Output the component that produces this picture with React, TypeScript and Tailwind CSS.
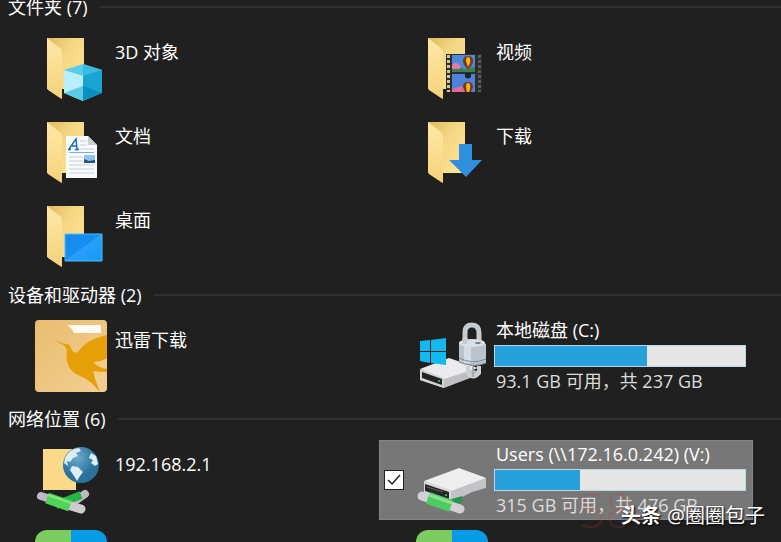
import type { ReactNode } from "react";

function Folder({ children }: { children?: ReactNode }) {
  return (
    <svg viewBox="0 0 72 72" className="size-[72px] shrink-0" aria-hidden="true">
      <defs>
        <linearGradient id="back" x1="0" y1="0" x2="1" y2="1">
          <stop offset="0" stopColor="#dfb85c" />
          <stop offset="0.4" stopColor="#f5d783" />
          <stop offset="1" stopColor="#ffe59a" />
        </linearGradient>
        <linearGradient id="flap" x1="0" y1="0" x2="0" y2="1">
          <stop offset="0" stopColor="#ffe9a8" />
          <stop offset="1" stopColor="#f6d27a" />
        </linearGradient>
        <linearGradient id="screen" x1="0" y1="0" x2="1" y2="1">
          <stop offset="0" stopColor="#1687e8" />
          <stop offset="0.49" stopColor="#1590f2" />
          <stop offset="0.5" stopColor="#2a9ffb" />
          <stop offset="1" stopColor="#129afa" />
        </linearGradient>
      </defs>
      <path d="M12 6H49V57H12Z" fill="url(#back)" />
      <path d="M12 6L26 17Q27 18 27 20V67L25 66L13 58Q12 57 12 55Z" fill="url(#flap)" />
      {children}
    </svg>
  );
}

function Cube() {
  return (
    <g>
      <path d="M29 38L48 44V69L29 61Z" fill="#b8effa" />
      <path d="M48 44L67 38V61L48 69Z" fill="#18a5d2" />
      <path d="M29 61L48 54V69Z" fill="#5ccbe4" />
      <path d="M48 54L67 61L48 69Z" fill="#0b8fbe" />
      <path d="M29 38L48 32L67 38L48 44Z" fill="#5accea" />
      <path d="M48 32L67 38L48 44Z" fill="#3bbbe0" />
    </g>
  );
}

function Paper() {
  return (
    <g>
      <path d="M31 20H53L62 29V62H31Z" fill="#f8fafc" />
      <path d="M53 20V29H62Z" fill="#cbd0d6" />
      <path d="M45 25H52M45 29H52M45 33H59M34 49H59M34 53H59M34 57H59M34 41H48M34 45H48" stroke="#c3d0da" strokeWidth="1" />
      <path d="M34 36.500H59" stroke="#7fb0d3" strokeWidth="1" />
      <path d="M34 33L41 23L42 33M37 30H42M33 33.500H36M40 33.500H44" stroke="#176ea5" strokeWidth="1.400" fill="none" />
      <path d="M49 39H60V47H49Z" fill="#8fc4ea" />
      <path d="M49 43L54 45L60 44V47H49Z" fill="#26537c" />
    </g>
  );
}

function Film() {
  return (
    <g>
      <path d="M30 22H66V60H30Z" fill="#2d2d2d" />
      <path d="M32.500 23V60" stroke="#d6c98d" strokeWidth="3" strokeDasharray="3 2" />
      <path d="M63.500 23V60" stroke="#5b5b5b" strokeWidth="3" strokeDasharray="3 2" />
      <path d="M36 23H59V40H36Z" fill="#4a8be0" />
      <path d="M36 42H59V60H36Z" fill="#4d83dc" />
      <path d="M36 36Q42 33 48 37L59 35V40H36Z" fill="#3b8055" />
      <path d="M36 33Q40 28 45 34L44 37H36Z" fill="#e279a6" />
      <path d="M36 57L46 54L50 60H36Z" fill="#e16a96" />
      <path d="M47 29Q47 24 52 24Q57 24 57 29Q57 33 52 37Q47 33 47 29Z" fill="#81350f" />
      <path d="M50 29Q50 25 52 25Q55 25 54 31L52 35Z" fill="#f6b824" />
      <path d="M49 41H55V45Q52 48 49 45Z" fill="#222222" />
      <path d="M47 55Q47 50 52 50Q57 50 57 55L55 60H49Z" fill="#81350f" />
      <path d="M50 55Q50 51 52 51Q55 51 54 57L53 60H51Z" fill="#f6b824" />
    </g>
  );
}

function Bird() {
  return (
    <svg viewBox="0 0 72 72" className="size-[72px] shrink-0" aria-hidden="true">
      <defs>
        <linearGradient id="sand" x1="0" y1="0" x2="1" y2="1">
          <stop offset="0" stopColor="#e9bd70" />
          <stop offset="1" stopColor="#f4cf92" />
        </linearGradient>
        <clipPath id="tile"><rect width="72" height="72" rx="4" /></clipPath>
      </defs>
      <g clipPath="url(#tile)">
        <rect width="72" height="72" fill="url(#sand)" />
        <path d="M32 5H65Q66 5 66 7V13H39Q37 8 32 5Z" fill="#fffdf5" />
        <path d="M18 20Q25 21 29 24Q34 23 36 28Q38 34 43 32Q50 20 72 15V38Q66 42 58 42Q64 48 72 49V52Q64 52 58 51Q60 60 65 72Q54 59 45 56Q35 52 32 42Q31 35 32 31Q31 24 18 20Z" fill="#e5a008" />
      </g>
    </svg>
  );
}

function SystemDrive() {
  return (
    <svg viewBox="0 0 72 72" className="size-[72px] shrink-0" aria-hidden="true">
      <path d="M4 52L30 45L62 51V55L28 68L4 60Z" fill="#bfc0c3" />
      <path d="M4 49L33 38L62 48L28 59Z" fill="#ebebed" />
      <path d="M4 49L28 58V68L4 60Z" fill="#d3d3d6" />
      <path d="M6 52L26 59V65L6 58Z" fill="#202322" />
      <circle cx="23" cy="61" r="1" fill="#43d35b" />
      <path d="M4 21L14 20V31H4ZM15 20L30 18V31H15ZM4 32H14V43L4 41ZM15 32H30V45L15 43Z" fill="#12b9ee" />
      <path d="M49 24V12Q49 5 56 5Q63 5 63 13V24" fill="none" stroke="#c6cbd0" strokeWidth="5" />
      <path d="M43 22Q56 17 70 24V43Q57 49 43 42Z" fill="#b9c3cc" />
      <path d="M48 26V43H55V27Z" fill="#d5dce2" />
      <ellipse cx="56" cy="23" rx="13" ry="4" fill="#d9dfe4" />
      <path d="M43 38Q57 45 70 39M43 42Q57 48 70 43" fill="none" stroke="#7e8d9a" strokeWidth="1" />
      <path d="M49 24V18" stroke="#c6cbd0" strokeWidth="5" />
      <ellipse cx="62" cy="23" rx="3" ry="1" fill="#687986" />
      <path d="M52 46V53Q57 60 63 53V46" fill="none" stroke="#cbd0d4" strokeWidth="4" />
      <path d="M57 47V57" stroke="#a6adb4" strokeWidth="2" />
    </svg>
  );
}

function NetworkDrive() {
  return (
    <svg viewBox="0 0 72 72" className="size-[72px] shrink-0" aria-hidden="true">
      <path d="M8 39L44 25L70 34V44L56 48L34 59L8 50Z" fill="#c3c3c7" />
      <path d="M8 37L43 24L70 34L35 47Z" fill="#eeeeef" />
      <path d="M8 37L35 46V58L8 49Z" fill="#dadade" />
      <path d="M9 40L33 48V55L9 47Z" fill="#272827" />
      <path d="M11 43L27 48" stroke="#666666" strokeWidth="1" />
      <circle cx="30" cy="51" r="1" fill="#43d35b" />
      <path d="M32 56L46 52V58L36 64Z" fill="#26984d" />
      <path d="M6 52L44 65" stroke="#d2cfd8" strokeWidth="9" strokeLinecap="round" />
      <path d="M12 54L35 62" stroke="#4dcc62" strokeWidth="12" />
      <path d="M13 51L36 59" stroke="#8be291" strokeWidth="3" />
    </svg>
  );
}

function NetworkPlace() {
  return (
    <svg viewBox="0 0 72 72" className="size-[72px] shrink-0" aria-hidden="true">
      <defs>
        <radialGradient id="sea" cx="0.4" cy="0.3">
          <stop offset="0" stopColor="#6eaccb" />
          <stop offset="1" stopColor="#2a719c" />
        </radialGradient>
      </defs>
      <path d="M8 5H41V46H8Z" fill="#fbd98b" />
      <circle cx="46" cy="21" r="18" fill="url(#sea)" />
      <path d="M30 14Q34 5 44 4L46 7L41 9L43 12L38 14L35 18L32 17L33 22L29 19ZM37 22L43 23L48 28L45 32L42 37L39 32L35 26ZM56 9L61 12L63 20L60 22L56 19L58 16L54 14Z" fill="#dceef4" />
      <path d="M6 52L18 56M40 57L50 50" stroke="#bfb9c3" strokeWidth="8" strokeLinecap="round" />
      <path d="M21 61L46 51" stroke="#25b544" strokeWidth="8" />
      <path d="M36 62L46 65" stroke="#d0c9d0" strokeWidth="9" strokeLinecap="round" />
      <path d="M12 54L35 62" stroke="#4fd458" strokeWidth="11" />
      <path d="M13 51L36 59" stroke="#83e980" strokeWidth="2" />
    </svg>
  );
}

function SplitIcon() {
  return (
    <span className="mt-0.5 flex size-[72px] shrink-0 overflow-hidden rounded-xl" aria-hidden="true">
      <span className="flex-1 bg-[#7dcc62]" />
      <span className="flex-1 bg-[#059be5]" />
    </span>
  );
}

function Section({ title, children, first }: { title: string; children: ReactNode; first?: boolean }) {
  return (
    <section className={first ? "pb-[5px]" : "pb-[9px]"}>
      <h2 className="flex h-7 items-center gap-3 pl-2 whitespace-nowrap">
        {title}
        <span className="h-0.5 flex-1 bg-[#303030]" />
      </h2>
      <ul className="mt-[7px] -ml-0.5 grid grid-cols-[repeat(auto-fill,374px)] gap-x-[7px] gap-y-1">
        {children}
      </ul>
    </section>
  );
}

function Tile({ icon, name }: { icon: ReactNode; name?: string }) {
  return (
    <li className="flex h-20 gap-2 py-1 pl-[37px]">
      {icon}
      {name && <span className="pt-1">{name}</span>}
    </li>
  );
}

function DriveTile({ icon, name, detail, used, total, selected }: {
  icon: ReactNode; name: string; detail: string; used: number; total: number; selected?: boolean;
}) {
  return (
    <li className={selected ? "flex h-20 bg-[#777777] py-1 pr-[7px] outline outline-[#858585] -outline-offset-1" : "flex h-20 py-1 pr-[7px]"}>
      <span className="flex w-[37px] shrink-0 items-center pl-[5px]">
        {selected && (
          <span className="grid size-5 place-items-center">
            <input
              type="checkbox"
              defaultChecked
              aria-label={name}
              className="peer col-start-1 row-start-1 size-5 appearance-none border border-[#222222] bg-white"
            />
            <svg viewBox="0 0 18 18" className="pointer-events-none invisible col-start-1 row-start-1 size-[18px] peer-checked:visible" aria-hidden="true">
              <path d="M3 9L7 13L15 4" fill="none" stroke="#222222" strokeWidth="1.500" />
            </svg>
          </span>
        )}
      </span>
      {icon}
      <div className="ml-1.5 flex-1">
        <span className="block pl-0.5 leading-5">{name}</span>
        <span className="mt-[5px] block h-[22px] border border-[#b9d9e8] bg-[#e6e6e6]" role="img" aria-label={detail}>
          <span className="block h-full bg-[#26a0da]" style={{ width: `${(used / total) * 100}%` }} />
        </span>
        <span className="mt-0.5 block pl-0.5 leading-6 text-[#dcdcdc]">{detail}</span>
      </div>
    </li>
  );
}

export default function App() {
  return (
    <main className="relative h-screen overflow-hidden bg-[#202020] font-['Open_Sans','Noto_Sans_CJK_SC',sans-serif] text-lg leading-8 text-white">
      <div className="-mt-[7px]">
        <Section title="文件夹 (7)" first>
          <Tile icon={<Folder><Cube /></Folder>} name="3D 对象" />
          <Tile icon={<Folder><Film /></Folder>} name="视频" />
          <Tile icon={<Folder><Paper /></Folder>} name="文档" />
          <Tile icon={<Folder><path d="M43 28H56V44H66L50 61L33 44H43Z" fill="#318fdf" /></Folder>} name="下载" />
          <Tile icon={<Folder><path d="M30 34H67V61H30Z" fill="url(#screen)" stroke="#51b8fb" /></Folder>} name="桌面" />
        </Section>
        <Section title="设备和驱动器 (2)">
          <Tile icon={<Bird />} name="迅雷下载" />
          <DriveTile icon={<SystemDrive />} name="本地磁盘 (C:)" detail="93.1 GB 可用，共 237 GB" used={144} total={237} />
        </Section>
        <Section title="网络位置 (6)">
          <Tile icon={<NetworkPlace />} name="192.168.2.1" />
          <DriveTile icon={<NetworkDrive />} name="Users (\\172.16.0.242) (V:)" detail="315 GB 可用，共 476 GB" used={161} total={476} selected />
          <Tile icon={<SplitIcon />} />
          <Tile icon={<SplitIcon />} />
        </Section>
      </div>
      <p className="absolute right-[148px] bottom-2 text-5xl leading-none font-light text-[#e03030]/20" aria-hidden="true">58</p>
      <p className="absolute right-4 bottom-2.5 flex gap-1.5 text-xl leading-8 [text-shadow:1px_1px_2px_#000]">
        <b>头条</b>
        <span>@圈圈包子</span>
      </p>
    </main>
  );
}
